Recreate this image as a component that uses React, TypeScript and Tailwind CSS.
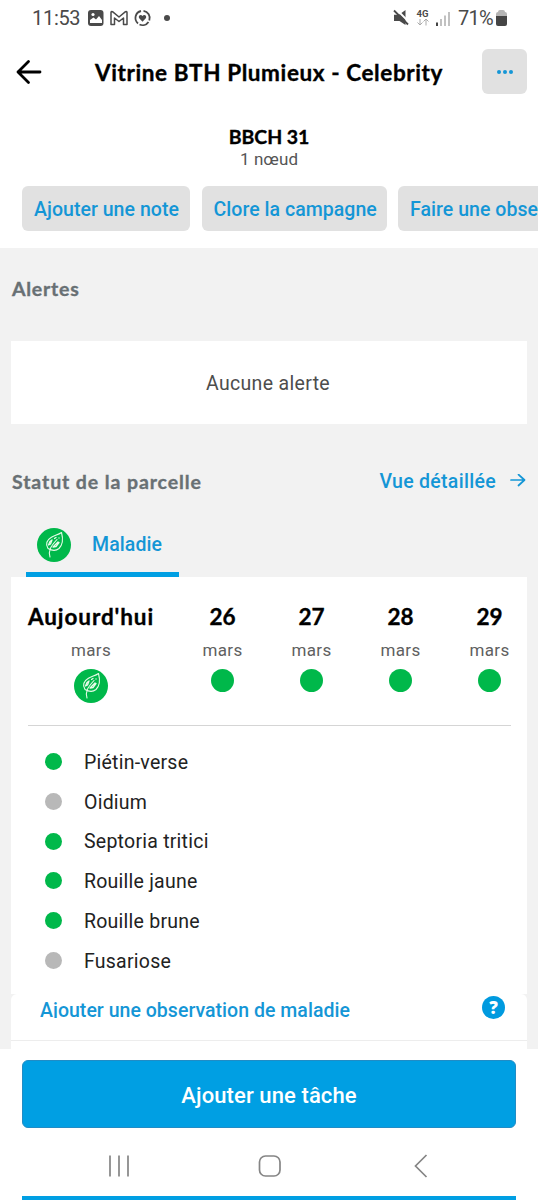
import React from "react";

const heading = "font-['Lato',sans-serif] font-bold whitespace-nowrap [-webkit-text-stroke:0.35px_currentColor]";

function Leaf() {
  return (
    <svg width="34" height="34" viewBox="0 0 34 34" className="shrink-0">
      <circle cx="17" cy="17" r="17" fill="#00b84a" />
      <g fill="none" stroke="#e9fbe9" strokeWidth="1.1" strokeLinecap="round" strokeLinejoin="round">
        <path d="M11 20.500C8 16 10 12 14 9.500C17 7.500 21 7 24.500 4.500C26 10 26 16.500 22 20.500C19 23 14.500 22.500 11 20.500Z" />
        <path d="M13 29C11 23 13.500 18.500 20 11.500" />
        <path d="M11.500 17L13 13.500L15 12L13.500 16Z M16 19L21 14L22 14.500L19 18.500Z M17.500 10.500L19 9.500M22 10V10" strokeWidth="1.3" />
      </g>
    </svg>
  );
}

const days = ["26", "27", "28", "29"];
const diseases = [
  { name: "Piétin-verse", active: true },
  { name: "Oidium", active: false },
  { name: "Septoria tritici", active: true },
  { name: "Rouille jaune", active: true },
  { name: "Rouille brune", active: true },
  { name: "Fusariose", active: false },
];

function StatusBar() {
  return (
    <div className="flex h-9 items-center justify-between pl-8 pr-[31px] text-[#4a4a4a]">
      <div className="flex items-center">
        <span className="w-[56px] whitespace-nowrap text-[20px] leading-9 tracking-[-0.3px]">11:53</span>
        <svg width="84" height="18" viewBox="0 0 84 18" fill="none" stroke="#4a4a4a">
          <rect x="0" y="1" width="15.500" height="16" rx="3" fill="#4a4a4a" stroke="none" />
          <path d="M2 14V11L5.500 8.500L8 10.500L11 7L14 11V14Z" fill="#fff" stroke="none" />
          <circle cx="5" cy="5.500" r="1.600" fill="#fff" stroke="none" />
          <path d="M23 15.500V3.500Q23 2 24.500 2.700L31 8L37.500 2.700Q39 2 39 3.500V15.500H35.500V9L31 12.500L26.500 9V15.500Z" strokeWidth="1.500" strokeLinejoin="round" />
          <path d="M53 2A7.200 7.200 0 0 0 50 14.500M51.500 15.500A7.200 7.200 0 0 0 60.500 13M61.300 11.500A7.200 7.200 0 0 0 55.500 1.900" strokeWidth="1.800" />
          <path d="M54.500 12.800L51 9C50 6.500 53 5 54.500 7C56 5 59 6.500 58 9Z" fill="#4a4a4a" stroke="none" />
          <circle cx="79" cy="9" r="3" fill="#4a4a4a" stroke="none" />
        </svg>
      </div>
      <div className="flex items-center">
        <svg width="58" height="18" viewBox="0 0 58 18" className="mr-[6px] overflow-visible">
          <path d="M0 5.800H5L11.500 1V16L5.500 12H0Z" fill="#4a4a4a" />
          <path d="M1.500 -0.500L15.500 13.500" stroke="#fff" strokeWidth="1.800" />
          <path d="M0 1.500L14 15.500" stroke="#4a4a4a" strokeWidth="1.800" />
          <text x="22.500" y="8" fontSize="9.500" fontWeight="700" fill="#4a4a4a" fontFamily="Roboto, sans-serif">4G</text>
          <path d="M26 10V16L23.500 13.500M26 16L28.500 13.500M32 16.500V10L29.500 12.500M32 10L34.500 12.500" stroke="#aaa" fill="none" />
          <path d="M43 13.500V17" stroke="#444" strokeWidth="2" />
          <path d="M47 10V17M51 6.500V17M55 3V17" stroke="#bbb" strokeWidth="1.800" />
        </svg>
        <span className="w-[38px] whitespace-nowrap text-[20px] leading-9 tracking-[-0.7px]">71%</span>
        <svg width="11" height="16" viewBox="0 0 11 16">
          <path d="M2 2Q2 0 4 0H7Q9 0 9 2Q11 2 11 4V7H0V4Q0 2 2 2Z" fill="#b5b5b5" />
          <path d="M0 6H11V14Q11 16 9 16H2Q0 16 0 14Z" fill="#454545" />
        </svg>
      </div>
    </div>
  );
}

function ActionButton({ children, className }: { children: React.ReactNode; className: string }) {
  return (
    <button className={`flex h-[45px] shrink-0 items-center whitespace-nowrap rounded-md bg-[#e1e1e1] pl-3 pt-[3px] text-[19.5px] font-medium tracking-[0.04px] text-[#1496d6] ${className}`}>
      {children}
    </button>
  );
}

export default function App() {
  return (
    <div className="flex h-[1200px] w-[538px] flex-col overflow-hidden bg-white font-['Roboto',sans-serif]">
      <header className="h-[248px] shrink-0 overflow-hidden bg-white">
        <StatusBar />
        <div className="flex h-[71px] items-center pl-4 pr-[11px]">
          <svg width="26" height="26" viewBox="0 0 26 26" fill="none" stroke="#000" strokeWidth="2.800" strokeLinecap="round" strokeLinejoin="round">
            <path d="M24 13H2M12.500 2.500L2 13L12.500 23.500" />
          </svg>
          <h1 className={`${heading} ml-[53px] pt-[2px] text-[22.5px] leading-8 tracking-[0.6px]`}>Vitrine BTH Plumieux - Celebrity</h1>
          <button className="ml-auto flex h-[45px] w-[45px] items-center justify-center gap-[2px] rounded-md bg-[#e1e1e1]">
            <span className="h-1 w-1 rounded-full bg-[#1496d6]" />
            <span className="h-1 w-1 rounded-full bg-[#1496d6]" />
            <span className="h-1 w-1 rounded-full bg-[#1496d6]" />
          </button>
        </div>
        <div className="flex h-[79px] flex-col items-center pt-[18px]">
          <h2 className={`${heading} text-[19.500px] leading-[23px] tracking-[-0.1px]`}>BBCH 31</h2>
          <p className="text-[17px] leading-[22px] tracking-[0.1px] text-[#555]">1 nœud</p>
        </div>
        <div className="flex gap-[11px] pl-[22px]">
          <ActionButton className="w-[168px]">Ajouter une note</ActionButton>
          <ActionButton className="ml-[0.5px] w-[185.5px]">Clore la campagne</ActionButton>
          <ActionButton className="w-[210px]">Faire une observation</ActionButton>
        </div>
      </header>

      <main className="flex h-[801px] shrink-0 flex-col bg-[#f2f2f2] px-[11px]">
        <h2 className={`${heading} mt-[25px] h-[68px] pl-[1px] text-[19.5px] leading-8 tracking-[0.75px] text-[#687074]`}>Alertes</h2>
        <section className="flex h-[83px] items-center justify-center bg-white pt-[3px] pr-[2px] text-[19.5px] tracking-[0.33px] text-[#4d4d4d]">
          Aucune alerte
        </section>
        <div className="mt-[42px] flex h-8 items-center">
          <h2 className={`${heading} pl-[1px] text-[19.5px] tracking-[0.9px] text-[#687074]`}>Statut de la parcelle</h2>
          <a className="ml-auto text-[19.5px] font-medium tracking-[0.3px] text-[#1496d6]">Vue détaillée</a>
          <svg width="16" height="16" viewBox="0 0 16 16" className="ml-[14px] mr-[1px]" fill="none" stroke="#1496d6" strokeWidth="1.700" strokeLinecap="round" strokeLinejoin="round">
            <path d="M1 6H14.500M8.500 0.500L14.500 6L8.500 11.500" />
          </svg>
        </div>
        <div className="mt-[14px] ml-[15px] flex h-[65px] w-[153px] items-center border-b-[5px] border-[#009fe3] pt-[6px] pl-[11px]">
          <Leaf />
          <span className="ml-[21px] text-[19.5px] font-medium tracking-[0.1px] text-[#1496d6]">Maladie</span>
        </div>
        <section className="h-[418px] bg-white">
          <div className="ml-[17px] mr-4 flex h-[149px] border-b border-[#d5d5d5] pt-[24px]">
            <div className="flex w-[128px] flex-col items-center">
              <h3 className={`${heading} text-[22.5px] leading-8 tracking-[0.9px]`}>Aujourd'hui</h3>
              <span className="mt-[3px] text-[17px] leading-7 tracking-[0.35px] text-[#606060]">mars</span>
              <div className="mt-[5px]"><Leaf /></div>
            </div>
            <div className="ml-[22px] flex pl-[2px]">
              {days.map((day) => (
                <div key={day} className="flex w-[89px] shrink-0 flex-col items-center">
                  <h3 className={`${heading} text-[22.5px] leading-8`}>{day}</h3>
                  <span className="mt-[3px] text-[17px] leading-7 tracking-[0.35px] text-[#606060]">mars</span>
                  <span className="mt-[5px] h-[23px] w-[23px] rounded-full bg-[#00b84a]" />
                </div>
              ))}
            </div>
          </div>
          <ul className="pt-[15.700px] pl-[34px]">
            {diseases.map((disease) => (
              <li key={disease.name} className="flex h-[39.900px] items-center">
                <span className={`h-[17px] w-[17px] rounded-full ${disease.active ? "bg-[#00b84a]" : "bg-[#b8b8b8]"}`} />
                <span className="ml-[22px] pt-[2px] text-[19.5px] tracking-[0.24px] text-[#222]">{disease.name}</span>
              </li>
            ))}
          </ul>
        </section>
        <section className="flex h-[47px] shrink-0 items-start rounded-t-md border-b border-[#ededed] bg-white pl-[29px] pr-[22px]">
          <span className="mt-[2px] h-[22px] overflow-hidden pt-px text-[19.5px] leading-7 font-medium tracking-[0.03px] text-[#1496d6]">Ajouter une observation de maladie</span>
          <span className="ml-auto mt-[2px] flex h-[23px] w-[23px] items-center justify-center rounded-full bg-[#009adf] font-['Noto_Sans',sans-serif] text-[17px] font-black text-white">?</span>
        </section>
        <div className="h-2 bg-white" />
      </main>

      <footer className="h-[151px] shrink-0 overflow-hidden bg-white">
        <div className="px-[22px] pt-[11px]">
          <button className="flex h-[68px] w-[494px] items-center justify-center rounded-md border border-[#218cc5] bg-[#009fe3] pt-[3px] text-[22px] font-medium tracking-[0.1px] text-white">Ajouter une tâche</button>
        </div>
        <nav className="flex h-[68px] items-center justify-center pt-[7px]">
          <svg width="322" height="24" viewBox="0 0 322 24" fill="none" stroke="#858585" strokeWidth="1.700">
            <path d="M2 1.500V22.500M11 1.500V22.500M20 1.500V22.500M318.500 1L307.500 12L318.500 23" />
            <rect x="151.500" y="2" width="20.500" height="20" rx="6" />
          </svg>
        </nav>
        <div className="mx-[22px] h-1 bg-[#009fe3]" />
      </footer>
    </div>
  );
}
